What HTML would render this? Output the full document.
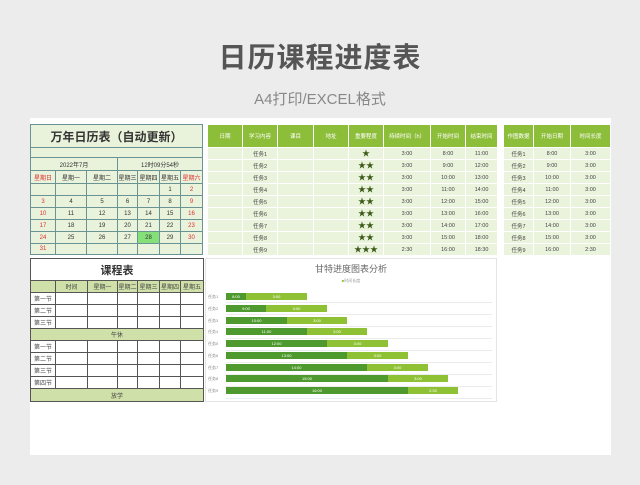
<!DOCTYPE html>
<html><head><meta charset="utf-8">
<style>
*{margin:0;padding:0;box-sizing:border-box}
body{width:640px;height:485px;background:#ececec;position:relative;overflow:hidden;font-family:"Liberation Sans","Noto Sans CJK SC",sans-serif}
.a{position:absolute}
.t{left:0;width:640px;text-align:center}
table{border-collapse:collapse;position:absolute;table-layout:fixed}
td{text-align:center;vertical-align:middle;padding:0;overflow:hidden;white-space:nowrap}
.cal td{border:1px solid #6a9494;font-size:6px;color:#333;background:#e9f2da}
.cal .r{color:#e03030}
.mid td{font-size:5.5px;color:#444;background:#eaf3dc;border:1px solid #fff}
.mid tr.h td{background:#8dbe3a;color:#fff}
.crs td{border:1px solid #555;font-size:6px;color:#444;background:#fff}
.crs .g td,.crs td.g{background:#cfe0a8}
.bar{position:absolute;height:7px;font-size:4px;color:#fff;text-align:center;line-height:7px}
.lb{position:absolute;left:208px;font-size:4px;color:#888}
</style></head><body>
<div class="a t" style="top:36px;font-size:28px;color:#555;font-weight:bold;letter-spacing:1px">日历课程进度表</div>
<div class="a t" style="top:88px;font-size:15px;color:#888">A4打印/EXCEL格式</div>
<div class="a" style="left:30px;top:118px;width:581px;height:337px;background:#fff"></div>

<table class="cal" style="left:30px;top:124px;width:172px">
<colgroup><col style="width:25px"><col style="width:31px"><col style="width:31px"><col style="width:20px"><col style="width:22px"><col style="width:21px"><col style="width:22px"></colgroup>
<tr style="height:23px"><td colspan="7" style="font-size:12px;font-weight:bold;color:#333">万年日历表（自动更新）</td></tr>
<tr style="height:10px"><td colspan="7"></td></tr>
<tr style="height:13px"><td colspan="3">2022年7月</td><td colspan="4">12时09分54秒</td></tr>
<tr style="height:13px"><td class="r">星期日</td><td>星期一</td><td>星期二</td><td>星期三</td><td>星期四</td><td>星期五</td><td class="r">星期六</td></tr>
<tr style="height:12px"><td></td><td></td><td></td><td></td><td></td><td>1</td><td class="r">2</td></tr>
<tr style="height:12px"><td class="r">3</td><td>4</td><td>5</td><td>6</td><td>7</td><td>8</td><td class="r">9</td></tr>
<tr style="height:12px"><td class="r">10</td><td>11</td><td>12</td><td>13</td><td>14</td><td>15</td><td class="r">16</td></tr>
<tr style="height:12px"><td class="r">17</td><td>18</td><td>19</td><td>20</td><td>21</td><td>22</td><td class="r">23</td></tr>
<tr style="height:12px"><td class="r">24</td><td>25</td><td>26</td><td>27</td><td style="background:#86e07a">28</td><td>29</td><td class="r">30</td></tr>
<tr style="height:11px"><td class="r">31</td><td></td><td></td><td></td><td></td><td></td><td></td></tr>
</table>

<table class="mid" style="left:207px;top:124px;width:290px">
<colgroup><col style="width:35px"><col style="width:35px"><col style="width:36px"><col style="width:35px"><col style="width:35px"><col style="width:47px"><col style="width:35px"><col style="width:32px"></colgroup>
<tr class="h" style="height:23px"><td>日期</td><td>学习内容</td><td>课目</td><td>地址</td><td>重要程度</td><td>持续时间（h）</td><td>开始时间</td><td>结束时间</td></tr>
<tr style="height:12px"><td></td><td>任务1</td><td></td><td></td><td style="font-size:8px;color:#3d5a1a">★</td><td>3:00</td><td>8:00</td><td>11:00</td></tr>
<tr style="height:12px"><td></td><td>任务2</td><td></td><td></td><td style="font-size:8px;color:#3d5a1a">★★</td><td>3:00</td><td>9:00</td><td>12:00</td></tr>
<tr style="height:12px"><td></td><td>任务3</td><td></td><td></td><td style="font-size:8px;color:#3d5a1a">★★</td><td>3:00</td><td>10:00</td><td>13:00</td></tr>
<tr style="height:12px"><td></td><td>任务4</td><td></td><td></td><td style="font-size:8px;color:#3d5a1a">★★</td><td>3:00</td><td>11:00</td><td>14:00</td></tr>
<tr style="height:12px"><td></td><td>任务5</td><td></td><td></td><td style="font-size:8px;color:#3d5a1a">★★</td><td>3:00</td><td>12:00</td><td>15:00</td></tr>
<tr style="height:12px"><td></td><td>任务6</td><td></td><td></td><td style="font-size:8px;color:#3d5a1a">★★</td><td>3:00</td><td>13:00</td><td>16:00</td></tr>
<tr style="height:12px"><td></td><td>任务7</td><td></td><td></td><td style="font-size:8px;color:#3d5a1a">★★</td><td>3:00</td><td>14:00</td><td>17:00</td></tr>
<tr style="height:12px"><td></td><td>任务8</td><td></td><td></td><td style="font-size:8px;color:#3d5a1a">★★</td><td>3:00</td><td>15:00</td><td>18:00</td></tr>
<tr style="height:12px"><td></td><td>任务9</td><td></td><td></td><td style="font-size:8px;color:#3d5a1a">★★★</td><td>2:30</td><td>16:00</td><td>18:30</td></tr>
</table>

<table class="mid" style="left:503px;top:124px;width:107px">
<colgroup><col style="width:30px"><col style="width:37px"><col style="width:40px"></colgroup>
<tr class="h" style="height:23px"><td>作图数据</td><td>开始日期</td><td>时间长度</td></tr>
<tr style="height:12px"><td>任务1</td><td>8:00</td><td>3:00</td></tr>
<tr style="height:12px"><td>任务2</td><td>9:00</td><td>3:00</td></tr>
<tr style="height:12px"><td>任务3</td><td>10:00</td><td>3:00</td></tr>
<tr style="height:12px"><td>任务4</td><td>11:00</td><td>3:00</td></tr>
<tr style="height:12px"><td>任务5</td><td>12:00</td><td>3:00</td></tr>
<tr style="height:12px"><td>任务6</td><td>13:00</td><td>3:00</td></tr>
<tr style="height:12px"><td>任务7</td><td>14:00</td><td>3:00</td></tr>
<tr style="height:12px"><td>任务8</td><td>15:00</td><td>3:00</td></tr>
<tr style="height:12px"><td>任务9</td><td>16:00</td><td>2:30</td></tr>
</table>

<table class="crs" style="left:30px;top:258px;width:173px">
<colgroup><col style="width:25px"><col style="width:32px"><col style="width:30px"><col style="width:20px"><col style="width:22px"><col style="width:21px"><col style="width:23px"></colgroup>
<tr style="height:22px"><td colspan="7" style="font-size:11px;font-weight:bold;color:#333">课程表</td></tr>
<tr class="g" style="height:12px"><td></td><td>时间</td><td>星期一</td><td>星期二</td><td>星期三</td><td>星期四</td><td>星期五</td></tr>
<tr style="height:12px"><td>第一节</td><td></td><td></td><td></td><td></td><td></td><td></td></tr>
<tr style="height:12px"><td>第二节</td><td></td><td></td><td></td><td></td><td></td><td></td></tr>
<tr style="height:12px"><td>第三节</td><td></td><td></td><td></td><td></td><td></td><td></td></tr>
<tr class="g" style="height:12px"><td colspan="7">午休</td></tr>
<tr style="height:12px"><td>第一节</td><td></td><td></td><td></td><td></td><td></td><td></td></tr>
<tr style="height:12px"><td>第二节</td><td></td><td></td><td></td><td></td><td></td><td></td></tr>
<tr style="height:12px"><td>第三节</td><td></td><td></td><td></td><td></td><td></td><td></td></tr>
<tr style="height:12px"><td>第四节</td><td></td><td></td><td></td><td></td><td></td><td></td></tr>
<tr class="g" style="height:13px"><td colspan="7">放学</td></tr>
</table>

<div class="a" style="left:205px;top:258px;width:292px;height:144px;border:1px solid #e4e4e4;background:#fff"></div>
<div class="a" style="left:205px;top:262px;width:292px;text-align:center;font-size:9px;color:#666">甘特进度图表分析</div>
<div class="a" style="left:205px;top:278px;width:292px;text-align:center;font-size:4px;color:#8fc134">■<span style="color:#999">时间长度</span></div>
<div class="a" style="left:226px;top:291px;width:266px;height:108px;background:repeating-linear-gradient(#fff 0,#fff 11px,#ececec 11px,#ececec 12px)"></div>

<div class="lb" style="top:294px">任务1</div><div class="bar" style="left:226px;top:293px;width:20px;background:#4e9a2e">8:00</div><div class="bar" style="left:246px;top:293px;width:61px;background:#8fc134">3:00</div>
<div class="lb" style="top:306px">任务2</div><div class="bar" style="left:226px;top:305px;width:40px;background:#4e9a2e">9:00</div><div class="bar" style="left:266px;top:305px;width:61px;background:#8fc134">3:00</div>
<div class="lb" style="top:318px">任务3</div><div class="bar" style="left:226px;top:317px;width:61px;background:#4e9a2e">10:00</div><div class="bar" style="left:287px;top:317px;width:60px;background:#8fc134">3:00</div>
<div class="lb" style="top:329px">任务4</div><div class="bar" style="left:226px;top:328px;width:81px;background:#4e9a2e">11:00</div><div class="bar" style="left:307px;top:328px;width:60px;background:#8fc134">3:00</div>
<div class="lb" style="top:341px">任务5</div><div class="bar" style="left:226px;top:340px;width:101px;background:#4e9a2e">12:00</div><div class="bar" style="left:327px;top:340px;width:61px;background:#8fc134">3:00</div>
<div class="lb" style="top:353px">任务6</div><div class="bar" style="left:226px;top:352px;width:121px;background:#4e9a2e">13:00</div><div class="bar" style="left:347px;top:352px;width:61px;background:#8fc134">3:00</div>
<div class="lb" style="top:365px">任务7</div><div class="bar" style="left:226px;top:364px;width:141px;background:#4e9a2e">14:00</div><div class="bar" style="left:367px;top:364px;width:61px;background:#8fc134">3:00</div>
<div class="lb" style="top:376px">任务8</div><div class="bar" style="left:226px;top:375px;width:162px;background:#4e9a2e">15:00</div><div class="bar" style="left:388px;top:375px;width:60px;background:#8fc134">3:00</div>
<div class="lb" style="top:388px">任务9</div><div class="bar" style="left:226px;top:387px;width:182px;background:#4e9a2e">16:00</div><div class="bar" style="left:408px;top:387px;width:50px;background:#8fc134">2:30</div>
</body></html>
